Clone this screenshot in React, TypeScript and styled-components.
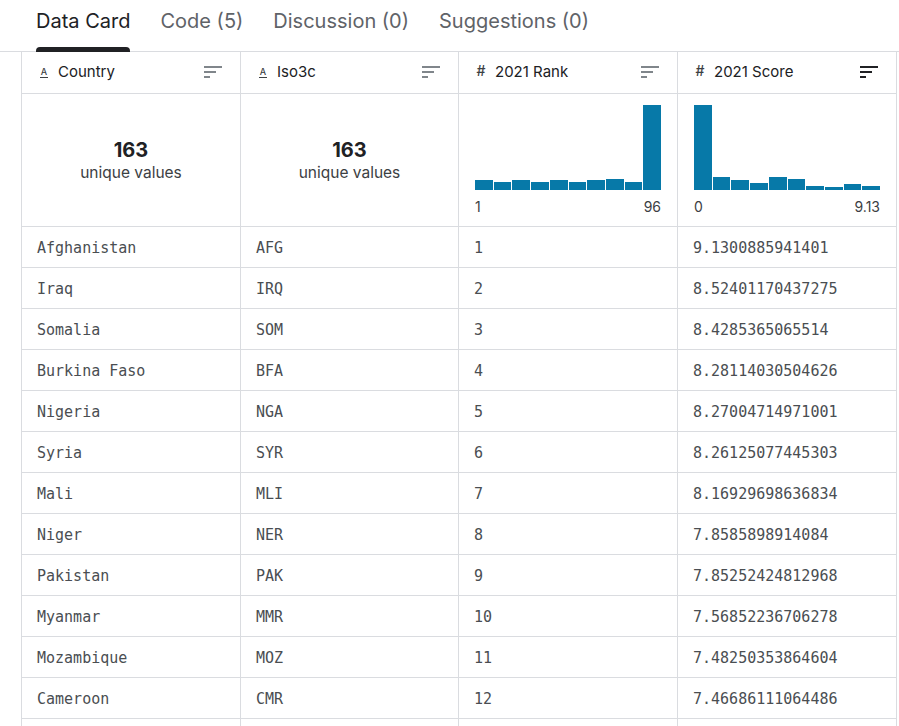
import React from "react";
import styled, { createGlobalStyle } from "styled-components";

const Global = createGlobalStyle`
  html, body { margin: 0; padding: 0; background: #fff; }
  body { font-family: Inter, "Noto Sans", sans-serif; color: #202124; overflow: hidden; }
`;

const Page = styled.div`
  width: 899px;
  height: 726px;
  overflow: hidden;
`;

const TabBar = styled.div`
  display: flex;
  gap: 30px;
  height: 52px;
  padding-left: 36px;
  border-bottom: 1px solid #dadce0;
  box-sizing: border-box;
`;

const Tab = styled.div<{ $active?: boolean }>`
  position: relative;
  font-size: 20px;
  line-height: 20px;
  padding-top: 11px;
  color: ${(p) => (p.$active ? "#202124" : "#5f6368")};
  white-space: nowrap;
  &::after {
    content: "";
    display: ${(p) => (p.$active ? "block" : "none")};
    position: absolute;
    left: 0;
    right: 0;
    bottom: -1px;
    height: 5px;
    border-radius: 4px 4px 0 0;
    background: #202124;
  }
`;

const Table = styled.div`
  margin-left: 21px;
  width: 875px;
  display: grid;
  grid-template-columns: 219px 218px 219px 219px;
  border-left: 1px solid #dadce0;
  box-sizing: border-box;
`;

const Cell = styled.div`
  border-right: 1px solid #dadce0;
  border-bottom: 1px solid #dadce0;
  box-sizing: border-box;
`;

const HeadCell = styled(Cell)`
  height: 42px;
  display: flex;
  align-items: center;
  padding: 0 18px 2px 16px;
  font-size: 15px;
  color: #202124;
`;

const TypeIcon = styled.span`
  width: 12px;
  margin-right: 8px;
  font-size: 10px;
  line-height: 10px;
  text-align: center;
  color: #3c4043;
`;

const StrIcon = styled.span`
  display: inline-block;
  font-size: 9px;
  line-height: 9px;
  border-bottom: 1px solid #3c4043;
  padding: 0 1px 1px;
  font-weight: 500;
`;

const NumIcon = styled.span`
  font-size: 14px;
  font-weight: 500;
`;

const HeadLabel = styled.span`
  flex: 1;
  white-space: nowrap;
`;

const SortIcon = ({ dark }: { dark?: boolean }) => (
  <svg width="18" height="12" viewBox="0 0 18 12">
    <g fill={dark ? "#202124" : "#80868b"}>
      <rect x="0" y="0" width="18" height="2" />
      <rect x="0" y="5" width="12" height="2" />
      <rect x="0" y="10" width="6" height="2" />
    </g>
  </svg>
);

const SummaryCell = styled(Cell)`
  height: 133px;
  display: flex;
  flex-direction: column;
  align-items: center;
  justify-content: center;
`;

const BigNum = styled.div`
  font-size: 20px;
  line-height: 24px;
  font-weight: 700;
  color: #202124;
`;

const SmallLabel = styled.div`
  font-size: 15.5px;
  line-height: 21px;
  color: #3c4043;
`;

const HistCell = styled(Cell)`
  height: 133px;
  padding: 11px 16px 0 16px;
  box-sizing: border-box;
`;

const Bars = styled.div`
  height: 85px;
  display: flex;
  align-items: flex-end;
  gap: 1px;
`;

const Bar = styled.div`
  flex: 1;
  background: #0779a8;
`;

const AxisRow = styled.div`
  display: flex;
  justify-content: space-between;
  font-size: 14px;
  line-height: 18px;
  margin-top: 8px;
  color: #3c4043;
`;

const DataCell = styled(Cell)`
  height: 41px;
  display: flex;
  align-items: center;
  padding-left: 15px;
  padding-top: 1px;
  font-family: "DejaVu Sans Mono", "Liberation Mono", monospace;
  font-size: 15px;
  color: #4a4e52;
  white-space: nowrap;
`;

const rankHist = [10, 8.5, 10, 8.5, 10, 8.5, 10, 11, 8.5, 85];
const scoreHist = [85, 13.3, 10, 7.3, 13.3, 11, 4.3, 3.3, 6, 4.3];

const rows: [string, string, string, string][] = [
  ["Afghanistan", "AFG", "1", "9.1300885941401"],
  ["Iraq", "IRQ", "2", "8.52401170437275"],
  ["Somalia", "SOM", "3", "8.4285365065514"],
  ["Burkina Faso", "BFA", "4", "8.28114030504626"],
  ["Nigeria", "NGA", "5", "8.27004714971001"],
  ["Syria", "SYR", "6", "8.26125077445303"],
  ["Mali", "MLI", "7", "8.16929698636834"],
  ["Niger", "NER", "8", "7.8585898914084"],
  ["Pakistan", "PAK", "9", "7.85252424812968"],
  ["Myanmar", "MMR", "10", "7.56852236706278"],
  ["Mozambique", "MOZ", "11", "7.48250353864604"],
  ["Cameroon", "CMR", "12", "7.46686111064486"],
  ["", "", "", ""],
];

const Histogram = ({ data, min, max }: { data: number[]; min: string; max: string }) => (
  <HistCell>
    <Bars>
      {data.map((h, i) => (
        <Bar key={i} style={{ height: `${h}px` }} />
      ))}
    </Bars>
    <AxisRow>
      <span>{min}</span>
      <span>{max}</span>
    </AxisRow>
  </HistCell>
);

export default function App() {
  return (
    <Page>
      <Global />
      <TabBar>
        <Tab $active>Data Card</Tab>
        <Tab>Code (5)</Tab>
        <Tab>Discussion (0)</Tab>
        <Tab>Suggestions (0)</Tab>
      </TabBar>
      <Table>
        <HeadCell>
          <TypeIcon><StrIcon>A</StrIcon></TypeIcon>
          <HeadLabel>Country</HeadLabel>
          <SortIcon />
        </HeadCell>
        <HeadCell>
          <TypeIcon><StrIcon>A</StrIcon></TypeIcon>
          <HeadLabel>Iso3c</HeadLabel>
          <SortIcon />
        </HeadCell>
        <HeadCell>
          <TypeIcon><NumIcon>#</NumIcon></TypeIcon>
          <HeadLabel>2021 Rank</HeadLabel>
          <SortIcon />
        </HeadCell>
        <HeadCell>
          <TypeIcon><NumIcon>#</NumIcon></TypeIcon>
          <HeadLabel>2021 Score</HeadLabel>
          <SortIcon dark />
        </HeadCell>

        <SummaryCell>
          <BigNum>163</BigNum>
          <SmallLabel>unique values</SmallLabel>
        </SummaryCell>
        <SummaryCell>
          <BigNum>163</BigNum>
          <SmallLabel>unique values</SmallLabel>
        </SummaryCell>
        <Histogram data={rankHist} min="1" max="96" />
        <Histogram data={scoreHist} min="0" max="9.13" />

        {rows.map((r, i) => (
          <React.Fragment key={i}>
            {r.map((c, j) => (
              <DataCell key={j}>{c}</DataCell>
            ))}
          </React.Fragment>
        ))}
      </Table>
    </Page>
  );
}
